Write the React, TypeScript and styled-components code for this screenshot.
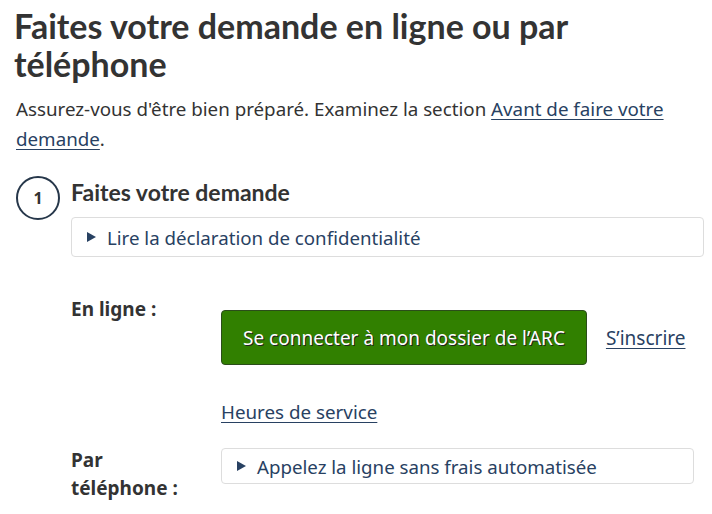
import React from "react";
import styled, { createGlobalStyle } from "styled-components";

const Global = createGlobalStyle`
  html, body { margin: 0; padding: 0; background: #fff; }
  body { font-family: "Noto Sans", sans-serif; color: #333; }
`;

const Page = styled.main`
  padding: 7px 8px 0 16px;
`;

const Title = styled.h1`
  font-family: Lato, sans-serif;
  font-weight: 700;
  font-size: 34px;
  line-height: 38px;
  color: #333;
  margin: 0 0 11px -2px;
`;

const Intro = styled.p`
  font-size: 18.75px;
  line-height: 30px;
  margin: 0 0 22px;
  color: #333;
`;

const Link = styled.a`
  color: #284162;
  text-decoration: underline;
  text-underline-offset: 3px;
  text-decoration-thickness: 1px;
`;

const RowLink = styled(Link)`
  font-size: 19px;
`;

const Step = styled.section`
  display: grid;
  grid-template-columns: 55px 1fr;
`;

const Circle = styled.div`
  width: 40px;
  height: 40px;
  border: 2px solid #26374a;
  border-radius: 50%;
  display: flex;
  align-items: center;
  justify-content: center;
  font-weight: 700;
  font-size: 16px;
  color: #333;
`;

const StepBody = styled.div`
  display: flex;
  flex-direction: column;
`;

const StepTitle = styled.h2`
  font-family: Lato, sans-serif;
  font-weight: 700;
  font-size: 23px;
  line-height: 30px;
  margin: 1px 0 10px;
  color: #333;
`;

const Details = styled.div<{ $width?: string; $height: number }>`
  border: 1px solid #ddd;
  border-radius: 4px;
  height: ${(p) => p.$height}px;
  display: flex;
  align-items: center;
  padding-left: 15px;
  gap: 11px;
  color: #284162;
  font-size: 18.7px;
  width: ${(p) => p.$width || "auto"};
  box-sizing: border-box;
`;

const Arrow = styled.span`
  width: 0;
  height: 0;
  border-top: 5.5px solid transparent;
  border-bottom: 5.5px solid transparent;
  border-left: 9px solid #284162;
  display: inline-block;
`;

const Methods = styled.div`
  display: grid;
  grid-template-columns: 150px 1fr;
  margin-top: 38px;
  row-gap: 20px;
`;

const Label = styled.div`
  font-weight: 700;
  font-size: 19px;
  line-height: 28px;
  color: #333;
`;

const Actions = styled.div`
  display: flex;
  flex-direction: column;
  align-items: flex-start;
  padding-top: 15px;
`;

const ButtonRow = styled.div`
  display: flex;
  align-items: center;
  gap: 19px;
`;

const Button = styled.button`
  background: #318000;
  border: 1px solid #2b4d1a;
  border-radius: 4px;
  color: #fff;
  font-family: "Noto Sans", sans-serif;
  font-size: 19px;
  height: 55px;
  padding: 0 21px;
  text-shadow: 1px 1px 0 #222;
`;

const PlainLink = styled(Link)`
  display: block;
  font-size: 18.8px;
  line-height: 28px;
  margin-top: 33px;
`;

const PhoneBox = styled.div`
  padding-top: 2px;
`;

export default function App() {
  return (
    <>
      <Global />
      <Page>
        <Title>Faites votre demande en ligne ou par téléphone</Title>
        <Intro>
          Assurez-vous d'être bien préparé. Examinez la section{" "}
          <Link href="#">Avant de faire votre demande</Link>.
        </Intro>
        <Step>
          <Circle>1</Circle>
          <StepBody>
            <StepTitle>Faites votre demande</StepTitle>
            <Details $height={40}>
              <Arrow />
              Lire la déclaration de confidentialité
            </Details>
            <Methods>
              <Label>En ligne :</Label>
              <Actions>
                <ButtonRow>
                  <Button>Se connecter à mon dossier de l’ARC</Button>
                  <RowLink href="#">S’inscrire</RowLink>
                </ButtonRow>
                <PlainLink href="#">Heures de service</PlainLink>
              </Actions>
              <Label>Par<br />téléphone :</Label>
              <PhoneBox>
                <Details $width="473px" $height={36}>
                  <Arrow />
                  Appelez la ligne sans frais automatisée
                </Details>
              </PhoneBox>
            </Methods>
          </StepBody>
        </Step>
      </Page>
    </>
  );
}
